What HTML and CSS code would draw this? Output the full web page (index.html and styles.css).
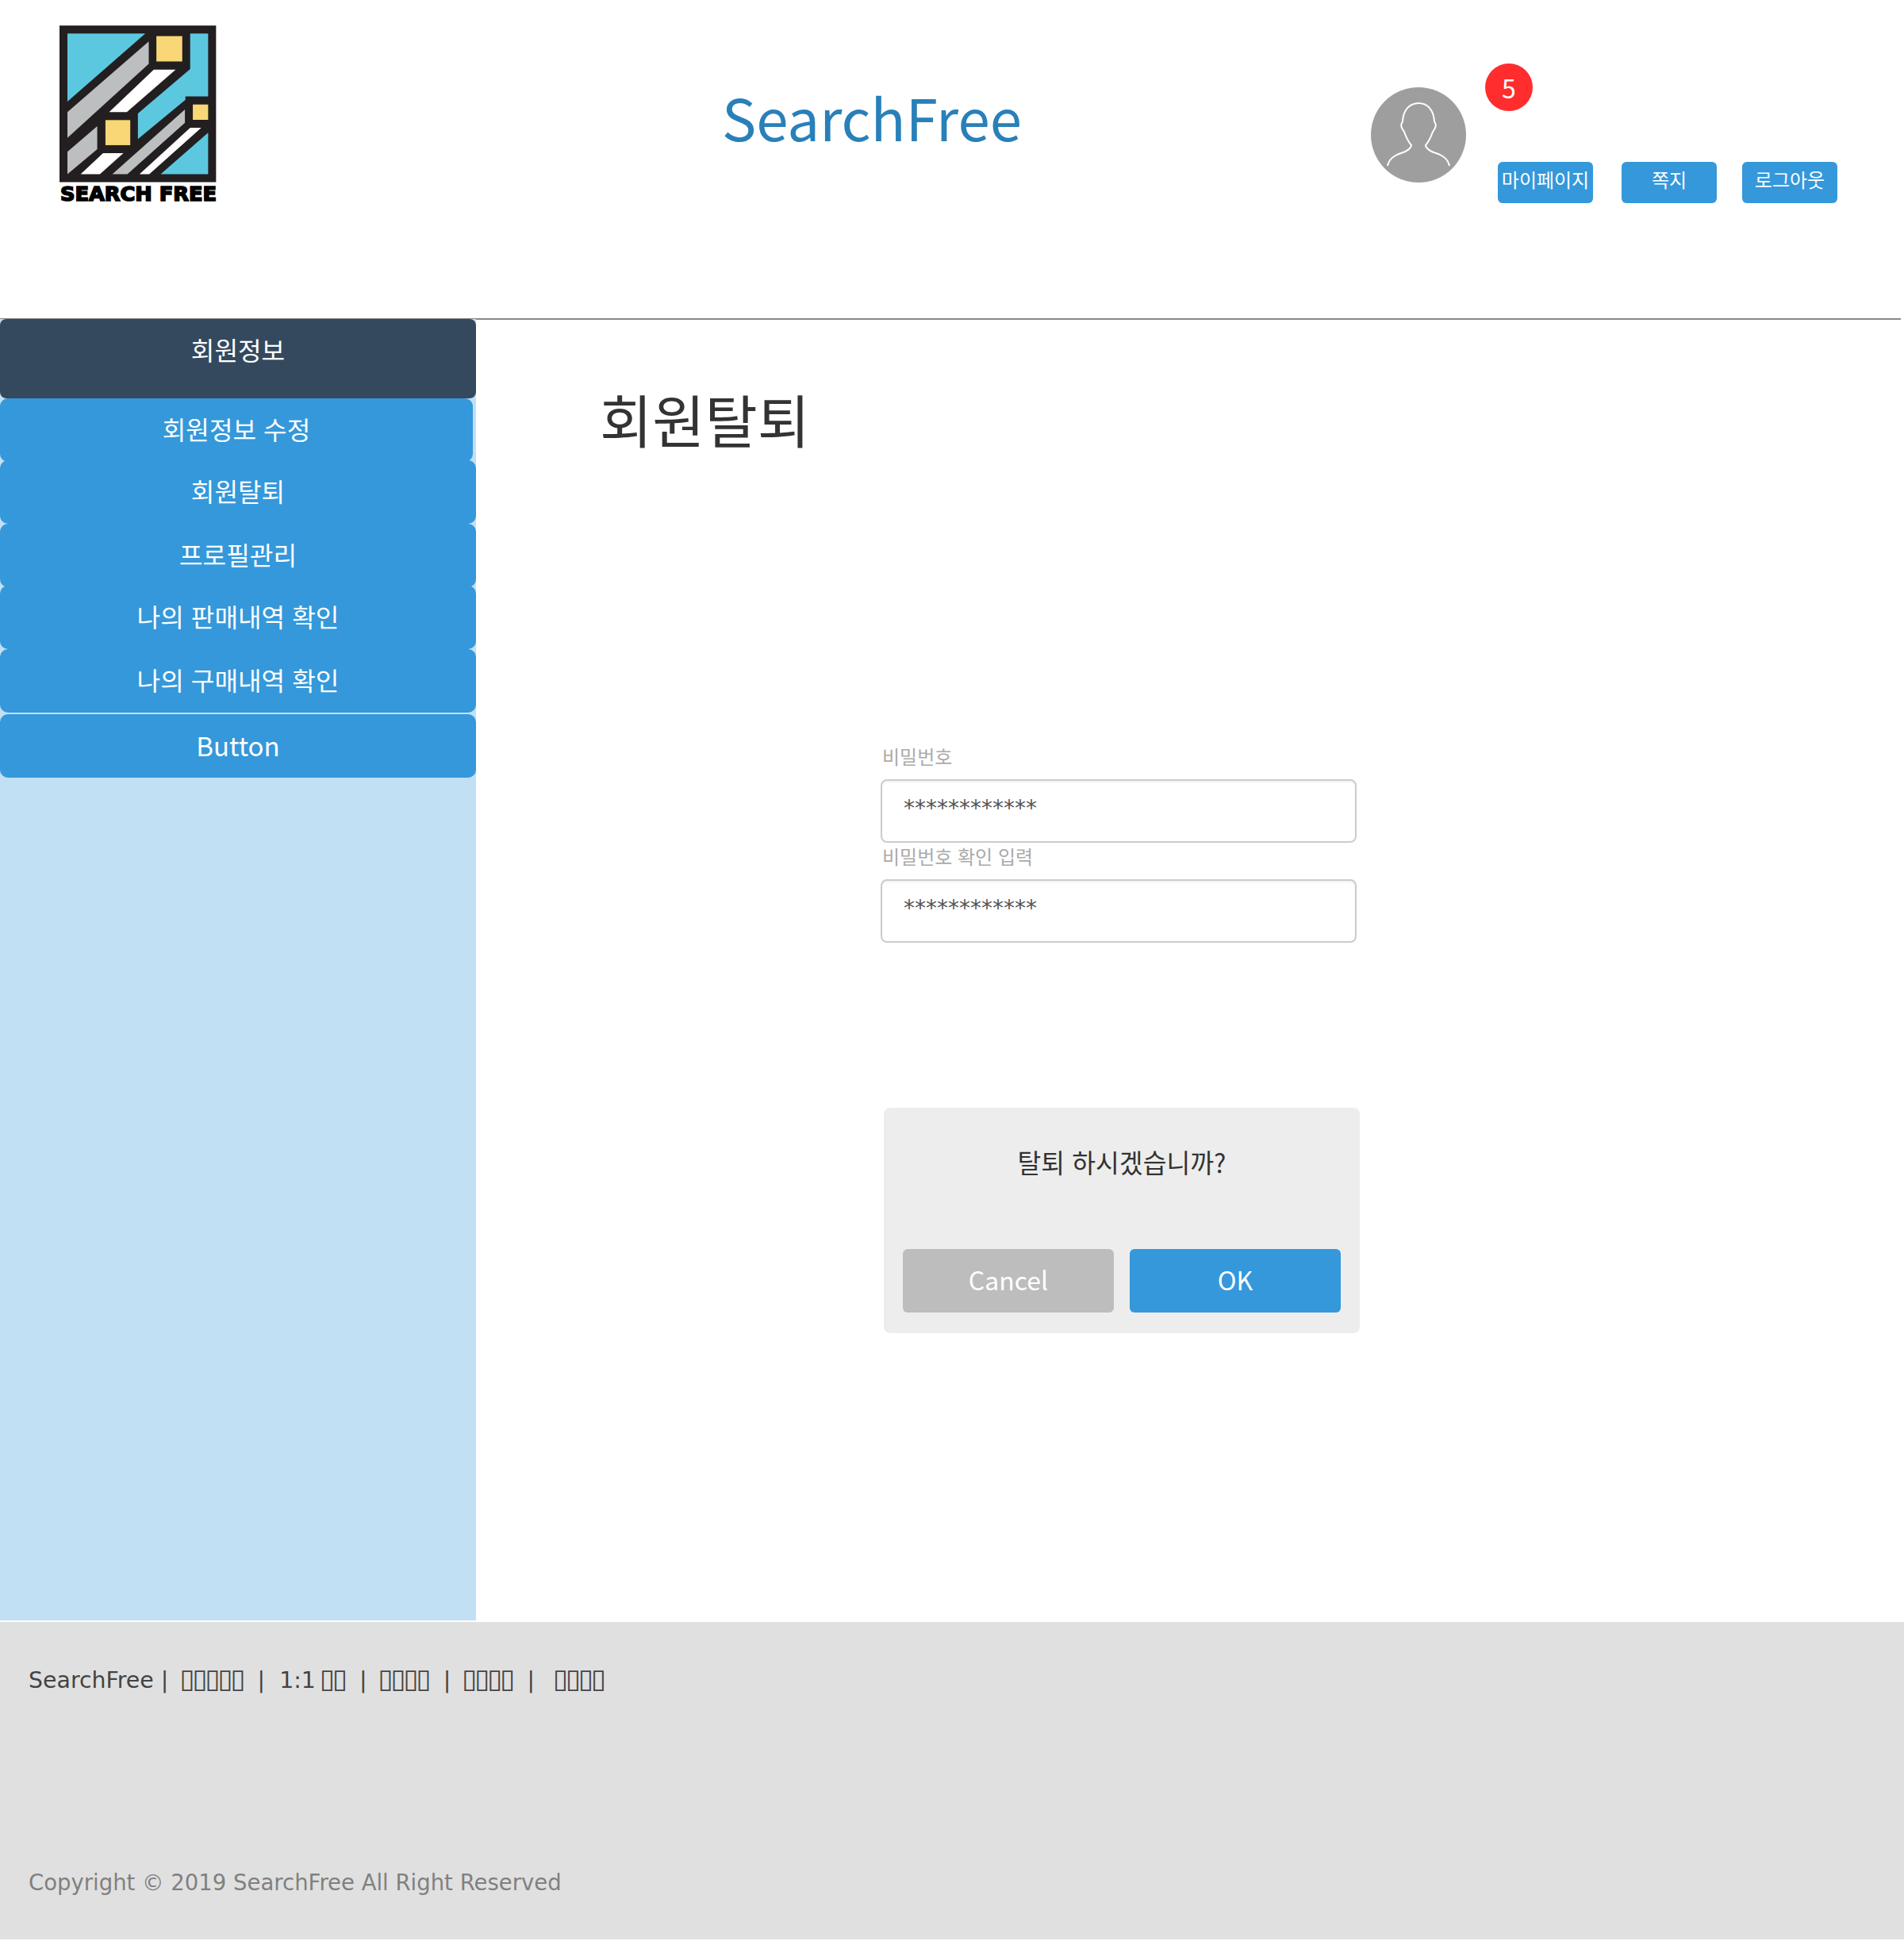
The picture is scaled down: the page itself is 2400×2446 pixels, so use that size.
FILE: index.html
```html
<!DOCTYPE html>
<html lang="ko">
<head>
<meta charset="utf-8">
<title>SearchFree</title>
<link rel="stylesheet" href="styles.css">
</head>
<body>
<header class="top">
  <svg class="logo" viewBox="105 97 598 702" aria-label="Search Free">
    <rect x="105" y="97" width="593" height="593" fill="#231f20"/>
    <g fill="#5bc8e0">
      <polygon points="135,127 430,127 135,385"/>
      <polygon points="600,127 668,127 668,365 582,365 582,378 402,527 402,430 600,262"/>
      <polygon points="668,503 668,660 488,660"/>
    </g>
    <g fill="#bcbec0">
      <polygon points="135,425 443,157 443,242 135,522"/>
      <polygon points="135,575 248,478 248,565 135,660"/>
      <polygon points="580,415 580,465 362,660 305,660"/>
    </g>
    <g fill="#fff">
      <polygon points="462,264 545,264 360,425 293,425"/>
      <polygon points="270,580 347,580 258,660 185,660"/>
      <polygon points="600,484 642,484 445,660 408,660"/>
    </g>
    <g fill="#f9d776">
      <rect x="472" y="137" width="98" height="96"/>
      <rect x="279" y="455" width="94" height="95"/>
      <rect x="610" y="396" width="58" height="58"/>
    </g>
    <text class="logo-word" x="108" y="761" textLength="592" lengthAdjust="spacingAndGlyphs">SEARCH FREE</text>
  </svg>
  <h1 class="brand">SearchFree</h1>
  <div class="user">
    <div class="avatar">
      <svg viewBox="0 0 120 120" class="avatar-icon"><path d="M21 99C23 90 29 86 38 83C46 81 51 76 51 73C46 67 44 62 42 56C39 52 37 48 39 45L40 43C41 28 49 20 60 20C71 20 79 28 80 43L81 45C83 48 81 52 78 56C76 62 74 67 69 73C69 76 74 81 82 83C91 86 97 90 99 99"/></svg>
    </div>
    <span class="badge">5</span>
    <nav class="user-nav">
      <a class="user-btn">마이페이지</a>
      <a class="user-btn">쪽지</a>
      <a class="user-btn last">로그아웃</a>
    </nav>
  </div>
</header>
<div class="rule"></div>
<div class="body">
  <aside class="side">
    <div class="side-head">회원정보</div>
    <a class="side-item narrow">회원정보 수정</a>
    <a class="side-item">회원탈퇴</a>
    <a class="side-item flush">프로필관리</a>
    <a class="side-item">나의 판매내역 확인</a>
    <a class="side-item flush">나의 구매내역 확인</a>
    <a class="side-item apart">Button</a>
  </aside>
  <main class="main">
    <h2 class="page-title">회원탈퇴</h2>
    <form class="form">
      <label class="field-label">비밀번호</label>
      <div class="field">************</div>
      <label class="field-label second">비밀번호 확인 입력</label>
      <div class="field">************</div>
    </form>
    <section class="dialog">
      <p class="dialog-text">탈퇴 하시겠습니까?</p>
      <div class="dialog-actions">
        <button type="button" class="dlg-btn cancel">Cancel</button>
        <button type="button" class="dlg-btn ok">OK</button>
      </div>
    </section>
  </main>
</div>
<footer class="foot">
  <p class="foot-links">SearchFree |&nbsp; <span class="tofu">▯▯▯▯▯</span> &nbsp;|&nbsp; 1:1 <span class="tofu">▯▯</span> &nbsp;|&nbsp; <span class="tofu">▯▯▯▯</span> &nbsp;|&nbsp; <span class="tofu">▯▯▯▯</span> &nbsp;|&nbsp; &nbsp;<span class="tofu">▯▯▯▯</span></p>
  <p class="foot-copy">Copyright © 2019 SearchFree All Right Reserved</p>
</footer>
</body>
</html>
```
FILE: styles.css
```css
* { box-sizing: border-box; }
html, body { margin: 0; background: #fff; }
body { font-family: "Noto Sans CJK KR", "Noto Sans", sans-serif; height: 2446px; }

.top { display: flex; align-items: flex-start; height: 401px; padding: 32px 0 0 75px; }
.logo { width: 199px; height: 234px; flex: none; display: block; }
.logo-word { font-family: "DejaVu Sans", sans-serif; font-weight: 700; font-size: 74px; fill: #000; stroke: #000; stroke-width: 5px; }
.brand { margin: 61px 0 0 636px; width: 816px; font-size: 72.6px; line-height: 108px; font-weight: 400; color: #2980b9; white-space: nowrap; flex: none; }
.user { position: relative; flex: none; width: 588px; height: 224px; margin-left: 2px; }
.avatar { position: absolute; left: 0; top: 78px; width: 120px; height: 120px; border-radius: 50%; background: #9e9e9e; }
.avatar-icon { display: block; width: 120px; height: 120px; fill: none; stroke: #fff; stroke-width: 2px; }
.badge { position: absolute; left: 144px; top: 48px; width: 60px; height: 60px; border-radius: 50%; background: #ff2d2d; color: #fff; font-size: 32px; line-height: 60px; text-align: center; }
.user-nav { position: absolute; left: 160px; top: 172px; display: flex; gap: 36px; }
.user-btn { width: 120px; height: 52px; border-radius: 6px; background: #3498db; color: #fff; font-size: 24px; line-height: 44px; text-align: center; white-space: nowrap; }
.user-btn.last { margin-left: -4px; }

.rule { width: calc(100% - 4px); height: 2px; background: #888; margin-bottom: -1px; }
.body { display: flex; height: 1640px; margin-bottom: 2px; }

.side { position: relative; width: 600px; flex: none; background: #c1e0f4; display: flex; flex-direction: column; }
.side-head { height: 100px; border-radius: 8px; background: #34495e; color: #fff; font-size: 32.2px; line-height: 76px; text-align: center; }
.side-item { height: 80px; border-radius: 10px; background: #3498db; color: #fff; font-size: 32.2px; line-height: 77px; text-align: center; margin-top: -2px; }
.side-item.narrow { margin-top: 0; width: 596px; }
.side-item.flush { margin-top: 0; }
.side-item.apart { margin-top: 2px; font-size: 33px; line-height: 78px; }

.main { flex: 1; position: relative; padding-left: 156px; }
.page-title { margin: 71px 0 0; font-size: 72px; line-height: 108px; font-weight: 400; color: #333; }
.form { margin: 357px 0 0 354px; width: 600px; display: flex; flex-direction: column; }
.field-label { font-size: 24px; line-height: 30px; color: #aaa; height: 36px; padding-left: 2px; margin-bottom: 8px; }
.field-label.second { margin: 2px 0 8px; }
.field { height: 80px; border: 2px solid #ccc; border-radius: 8px; box-shadow: inset 0 2px 3px rgba(0,0,0,.05); padding: 17px 0 0 27px; font-family: "DejaVu Sans", sans-serif; font-size: 28px; line-height: 36px; color: #555; }

.dialog { width: 600px; height: 284px; margin: 208px 0 0 358px; background: #ededed; border-radius: 8px; padding: 39px 24px 0; }
.dialog-text { margin: 0; height: 139px; text-align: center; font-size: 32.4px; line-height: 58px; color: #333; }
.dialog-actions { display: flex; justify-content: space-between; }
.dlg-btn { width: 266px; height: 80px; border: 0; border-radius: 6px; color: #fff; font-family: inherit; font-size: 32px; padding: 0 0 4px; }
.dlg-btn.cancel { background: #bdbdbd; }
.dlg-btn.ok { background: #3498db; }

.foot { height: 400px; background: #e0e0e0; padding: 0 36px; font-family: "DejaVu Sans", sans-serif; line-height: 40px; }
.foot p { margin: 0; white-space: pre; }
.foot-links { padding-top: 54px; color: #444; font-size: 28.4px; }
.tofu { font-size: 34px; letter-spacing: -2.7px; line-height: 1; margin-left: -4px; }
.foot-copy { margin-top: 214px !important; color: #808080; font-size: 27.5px; }
```
